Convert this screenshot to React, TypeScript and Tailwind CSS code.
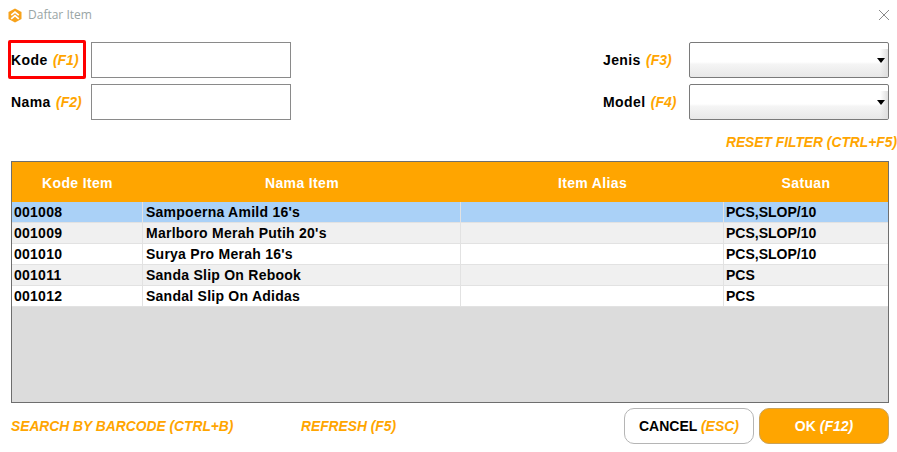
const font = "font-['Liberation_Sans',Arial,sans-serif]";

const rows = [
  { kode: "001008", nama: "Sampoerna Amild 16's", alias: "", satuan: "PCS,SLOP/10" },
  { kode: "001009", nama: "Marlboro Merah Putih 20's", alias: "", satuan: "PCS,SLOP/10" },
  { kode: "001010", nama: "Surya Pro Merah 16's", alias: "", satuan: "PCS,SLOP/10" },
  { kode: "001011", nama: "Sanda Slip On Rebook", alias: "", satuan: "PCS" },
  { kode: "001012", nama: "Sandal Slip On Adidas", alias: "", satuan: "PCS" },
];

const Label = ({ name, hotkey }: { name: string; hotkey: string }) => (
  <span className="text-[14px] font-bold tracking-[0.4px] text-black whitespace-nowrap">
    {name} <em className="ml-[1px] tracking-normal text-[#ffa500]">{hotkey}</em>
  </span>
);

const Select = () => (
  <div className="relative h-9 w-[200px] overflow-hidden rounded-[2px] border border-[#7a7a7a] bg-gradient-to-b from-white from-[56%] via-[#f5f5f5] via-[62%] to-[#e8e8e8]">
    <span className="absolute bottom-0 right-0 top-[6px] w-[8px] bg-gradient-to-r from-transparent to-[#dedede]" />
    <span className="absolute right-[3px] top-[15px] h-0 w-0 border-x-[4px] border-t-[5px] border-x-transparent border-t-black" />
  </div>
);

const App = () => {
  return (
    <div className={`${font} flex h-[452px] w-[897px] flex-col bg-white`}>
      {/* title bar */}
      <div className="flex h-[30px] items-center justify-between pl-2 pr-[6px]">
        <div className="flex items-center gap-[6px]">
          <svg width="14" height="15" viewBox="0 0 14 15">
            <path d="M7 0.5 L13.5 4 V11 L7 14.5 L0.5 11 V4 Z" fill="#f7a21b" />
            <path d="M3.2 7.2 L7 4 L10.8 7.2" fill="none" stroke="#fff" strokeWidth="1.7" />
            <path d="M3.2 10.8 L7 7.6 L10.8 10.8" fill="none" stroke="#fff" strokeWidth="1.7" />
          </svg>
          <span className="font-['Open_Sans',sans-serif] text-[12px] text-[#9aa5a5]">Daftar Item</span>
        </div>
        <svg width="12" height="12" viewBox="0 0 12 12" className="mr-[1px]">
          <path d="M1 1 L11 11 M11 1 L1 11" stroke="#8a8a8a" strokeWidth="1" />
        </svg>
      </div>

      {/* filters */}
      <div className="mt-[10px] flex justify-between pl-2 pr-2">
        <div className="flex gap-[5px]">
          <div className="flex flex-col gap-[5px]">
            <div className="flex h-[39px] w-[78px] items-center rounded-[2px] border-[3px] border-[#ff0000] pt-[2px]">
              <Label name="Kode" hotkey="(F1)" />
            </div>
            <div className="flex h-[36px] items-center pl-[3px]">
              <Label name="Nama" hotkey="(F2)" />
            </div>
          </div>
          <div className="mt-[2px] flex flex-col gap-[6px]">
            <div className="h-9 w-[200px] border border-[#8a8a8a] bg-white" />
            <div className="h-9 w-[200px] border border-[#8a8a8a] bg-white" />
          </div>
        </div>
        <div className="mt-[2px] flex">
          <div className="flex w-[86px] flex-col gap-[6px]">
            <div className="flex h-9 items-center">
              <Label name="Jenis" hotkey="(F3)" />
            </div>
            <div className="flex h-9 items-center">
              <Label name="Model" hotkey="(F4)" />
            </div>
          </div>
          <div className="flex flex-col gap-[6px]">
            <Select />
            <Select />
          </div>
        </div>
      </div>

      <div className="mt-[15px] text-right text-[13.8px] font-bold italic leading-[16px] text-[#ffa500]">
        RESET FILTER (CTRL+F5)
      </div>

      {/* table */}
      <div className="ml-[11px] mt-[10px] flex h-[242px] w-[878px] flex-col border border-[#6e6e6e] bg-[#dcdcdc]">
        <div className="grid h-10 grid-cols-[131px_318px_263px_164px] items-center bg-[#ffa500] pt-[2px] text-center text-[14px] font-bold tracking-[0.35px] text-white">
          <span>Kode Item</span>
          <span>Nama Item</span>
          <span>Item Alias</span>
          <span>Satuan</span>
        </div>
        {rows.map((row, i) => (
          <div
            key={row.kode}
            className={`grid h-[21px] grid-cols-[131px_318px_263px_164px] border-b border-[#e2e2e2] text-[14px] font-bold leading-[20px] tracking-[0.25px] text-black ${
              i === 0 ? "bg-[#aad1f7]" : i % 2 === 1 ? "bg-[#f0f0f0]" : "bg-white"
            }`}
          >
            <span className="border-r border-[#e2e2e2] pl-[2px]">{row.kode}</span>
            <span className="border-r border-[#e2e2e2] pl-[3px]">{row.nama}</span>
            <span className="border-r border-[#e2e2e2] pl-[3px]">{row.alias}</span>
            <span className="pl-[2px] tracking-normal">{row.satuan}</span>
          </div>
        ))}
      </div>

      {/* footer */}
      <div className="ml-[11px] mt-[5px] flex w-[878px] items-center justify-between">
        <div className="flex pt-[2px] text-[13.8px] font-bold italic text-[#ffa500]">
          <span className="w-[290px]">SEARCH BY BARCODE (CTRL+B)</span>
          <span>REFRESH (F5)</span>
        </div>
        <div className="flex gap-[5px]">
          <button className="h-9 w-[130px] rounded-[10px] border border-[#b5b5b5] bg-white text-[14px] font-bold text-black">
            CANCEL <em className="text-[#ffa500]">(ESC)</em>
          </button>
          <button className="h-9 w-[130px] rounded-[10px] border border-[#c9a25a] bg-[#ffa500] text-[14px] font-bold text-white">
            OK <em>(F12)</em>
          </button>
        </div>
      </div>
    </div>
  );
};

export default App;
